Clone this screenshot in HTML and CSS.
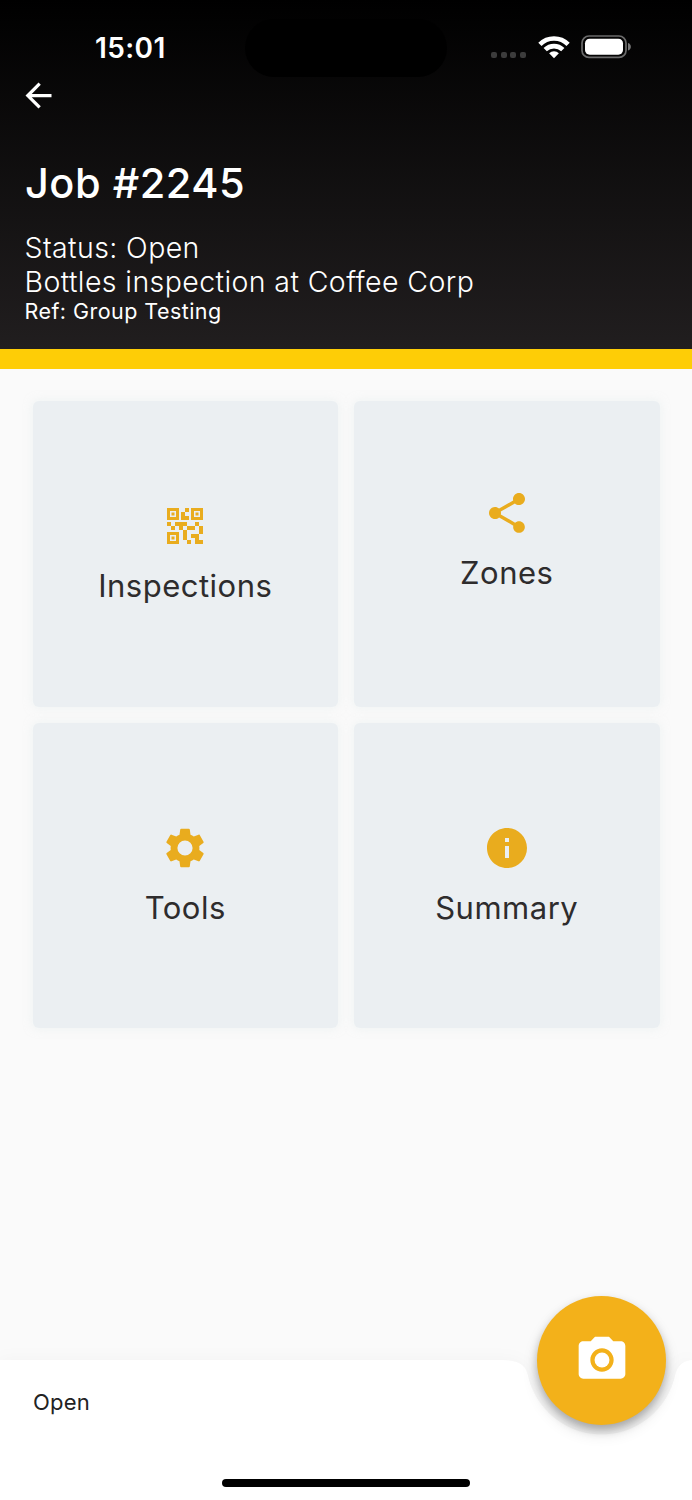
FILE: index.html
```
<!DOCTYPE html>
<html lang="en">
<head>
    <meta charset="UTF-8">
    <meta name="viewport" content="width=device-width, initial-scale=1.0">
    <title>Job #2245</title>
    <link rel="stylesheet" href="styles.css">
</head>
<body>
    <div class="screen">
        <header class="header">
            <div class="status-bar">
                <span class="time">15:01</span>
                <div class="island"></div>
                <div class="status-icons">
                    <div class="signal"><i></i><i></i><i></i><i></i></div>
                    <svg class="wifi" width="32" height="24" viewBox="0 0 32 24">
                        <g fill="none" stroke="#fff" stroke-width="4.6">
                            <path d="M1.9 9.3a20 20 0 0 1 28.2 0"/>
                            <path d="M7.2 14.7a12.5 12.5 0 0 1 17.6 0"/>
                        </g>
                        <path fill="#fff" d="M16 23.3l-4.9-5a7 7 0 0 1 9.8 0z"/>
                    </svg>
                    <svg class="battery" width="51" height="24" viewBox="0 0 51 24">
                        <rect x="1" y="1" width="44" height="21.4" rx="7" fill="none" stroke="#6b6b6b" stroke-width="1.7"/>
                        <rect x="4" y="3.7" width="38" height="16" rx="4.6" fill="#fff"/>
                        <path d="M47 8c3.8 1.2 3.8 6.4 0 7.6z" fill="#777"/>
                    </svg>
                </div>
            </div>
            <button class="back" aria-label="Back">
                <svg width="39" height="39" viewBox="0 0 24 24"><path d="M20 11H7.830l5.590-5.590L12 4l-8 8 8 8 1.410-1.410L7.830 13H20v-2z"/></svg>
            </button>
            <h1>Job #2245</h1>
            <p class="info">Status: Open</p>
            <p class="info desc">Bottles inspection at Coffee Corp</p>
            <p class="ref">Ref: Group Testing</p>
        </header>

        <main class="grid">
            <a class="tile">
                <svg viewBox="0 0 24 24"><path d="M15 21h-2v-2h2v2zm-2-7h-2v5h2v-5zm8-2h-2v4h2v-4zm-2-2h-2v2h2v-2zM7 12H5v2h2v-2zm-2-2H3v2h2v-2zm7-5h2V3h-2v2zm-7.500-.5v3h3v-3h-3zM9 9H3V3h6v6zm-4.500 7.500v3h3v-3h-3zM9 21H3v-6h6v6zm7.500-16.500v3h3v-3h-3zM21 9h-6V3h6v6zm-2 10v-3h-4v2h2v3h4v-2h-2zm-2-7h-4v2h4v-2zm-4-2H7v2h2v2h2v-2h2v-2zm1-1V7h-2V5h-2v4h4zM6.750 5.250h-1.500v1.500h1.500v-1.500zm0 12h-1.500v1.500h1.500v-1.500zm12-12h-1.500v1.500h1.500v-1.500z"/></svg>
                <span>Inspections</span>
            </a>
            <a class="tile tile-zones">
                <svg viewBox="0 0 24 24"><path d="M18 16.080c-.76 0-1.440.3-1.960.77L8.910 12.700c.05-.23.09-.46.09-.7s-.04-.47-.09-.7l7.050-4.110c.54.5 1.250.81 2.040.81 1.660 0 3-1.340 3-3s-1.340-3-3-3-3 1.340-3 3c0 .24.04.47.09.7L8.040 9.810C7.500 9.310 6.790 9 6 9c-1.660 0-3 1.340-3 3s1.340 3 3 3c.79 0 1.500-.31 2.040-.81l7.120 4.160c-.05.21-.08.43-.08.65 0 1.610 1.310 2.920 2.920 2.920 1.610 0 2.920-1.310 2.920-2.920s-1.310-2.920-2.920-2.920z"/></svg>
                <span>Zones</span>
            </a>
            <a class="tile">
                <svg viewBox="0 0 24 24"><path d="M19.140 12.940c.04-.3.06-.61.06-.94 0-.32-.02-.64-.07-.94l2.030-1.580c.18-.14.23-.41.12-.61l-1.920-3.320c-.12-.22-.37-.29-.59-.22l-2.390.96c-.5-.38-1.030-.7-1.620-.94l-.36-2.540c-.04-.24-.24-.41-.48-.41h-3.840c-.24 0-.43.17-.47.41l-.36 2.540c-.59.24-1.130.57-1.620.94l-2.390-.96c-.22-.08-.47 0-.59.22L2.740 8.870c-.12.21-.08.47.12.61l2.030 1.580c-.05.3-.09.63-.09.94s.02.64.07.94l-2.030 1.580c-.18.14-.23.41-.12.61l1.920 3.320c.12.22.37.29.59.22l2.390-.96c.5.38 1.030.7 1.620.94l.36 2.540c.05.24.24.41.48.41h3.840c.24 0 .44-.17.47-.41l.36-2.540c.59-.24 1.130-.56 1.620-.94l2.390.96c.22.08.47 0 .59-.22l1.920-3.320c.12-.22.07-.47-.12-.61l-2.010-1.580zM12 15.800a3.800 3.800 0 1 1 0-7.600 3.800 3.800 0 0 1 0 7.600z"/></svg>
                <span>Tools</span>
            </a>
            <a class="tile">
                <svg viewBox="0 0 24 24"><path d="M12 2C6.480 2 2 6.480 2 12s4.480 10 10 10 10-4.480 10-10S17.520 2 12 2zm1 15h-2v-6h2v6zm0-8h-2V7h2v2z"/></svg>
                <span>Summary</span>
            </a>
        </main>

        <footer class="bottom-bar">
            <svg class="bar-shape" width="692" height="141" viewBox="0 0 692 141">
                <path d="M0 0H500C517 0 525 4 527.500 14A75.500 75.500 0 0 0 675.500 14C678 5 684 .5 692 0V141H0z"/>
            </svg>
            <span class="state">Open</span>
            <button class="fab" aria-label="Take photo">
                <svg width="56" height="56" viewBox="0 0 24 24"><circle cx="12" cy="12" r="3.200"/><path d="M9 2L7.170 4H4c-1.100 0-2 .9-2 2v12c0 1.100.9 2 2 2h16c1.100 0 2-.9 2-2V6c0-1.100-.9-2-2-2h-3.170L15 2H9zm3 15c-2.760 0-5-2.240-5-5s2.240-5 5-5 5 2.240 5 5-2.240 5-5 5z"/></svg>
            </button>
            <div class="home-indicator"></div>
        </footer>
    </div>
</body>
</html>
```
FILE: styles.css
```
* {
    box-sizing: border-box;
}
body {
    margin: 0;
    font-family: Inter, "Liberation Sans", sans-serif;
    background: #fafafa;
}
h1, p {
    margin: 0;
    font-weight: normal;
}
button {
    border: none;
    padding: 0;
    background: none;
    cursor: pointer;
}
svg {
    display: block;
}
.screen {
    width: 692px;
    height: 1500px;
    display: flex;
    flex-direction: column;
    overflow: hidden;
}

/* Header */
.header {
    height: 369px;
    padding: 0 25px;
    color: #fff;
    background: linear-gradient(#000, #211e1f);
    border-bottom: 20px solid #fecd06;
    background-clip: padding-box;
    white-space: nowrap;
}
.status-bar {
    display: flex;
    align-items: flex-start;
    height: 76px;
    padding-left: 70px;
}
.time {
    width: 150px;
    padding-top: 31px;
    font-size: 28px;
    line-height: 34px;
    font-weight: 600;
    letter-spacing: 0.4px;
}
.island {
    width: 202px;
    height: 58px;
    margin-top: 19px;
    border-radius: 29px;
    background: #000;
}
.status-icons {
    display: flex;
    margin: 35px 0 0 44px;
}
.signal {
    display: flex;
    gap: 3.7px;
    padding-top: 16.5px;
    margin-right: 11.5px;
}
.signal i {
    width: 6px;
    height: 6.5px;
    border-radius: 2px;
    background: #3c3c3c;
}
.battery {
    margin-left: 11.5px;
}
.back {
    display: block;
    margin-left: -6px;
}
.back svg {
    fill: #fff;
}
h1 {
    margin-top: 43px;
    font-size: 41.5px;
    line-height: 50px;
    font-weight: 550;
    letter-spacing: 0.5px;
}
.info {
    margin-top: 23px;
    font-size: 28.5px;
    line-height: 34px;
    font-weight: 300;
    letter-spacing: 0.4px;
    margin-left: -0.5px;
}
.desc {
    margin-top: 0;
}
.ref {
    margin-left: -0.5px;
    font-size: 21.5px;
    line-height: 25px;
    letter-spacing: 0.45px;
}

/* Tiles */
.grid {
    display: grid;
    grid-template-columns: 305.5px 305.5px;
    grid-auto-rows: 305.5px;
    gap: 16px;
    padding: 32px 32.5px;
    flex: 1;
}
.tile {
    display: flex;
    flex-direction: column;
    align-items: center;
    padding-top: 101px;
    border-radius: 6px;
    background: #ebeff2;
    box-shadow: 0 0 10px rgba(225, 235, 235, 0.5);
    color: #2e2c2d;
    font-size: 31px;
    line-height: 40px;
    letter-spacing: 0.5px;
}
.tile-zones {
    padding-top: 88px;
}
.tile svg {
    width: 48px;
    height: 48px;
    margin-bottom: 16px;
    fill: #e9ac1e;
}

/* Bottom bar */
.bottom-bar {
    position: relative;
    height: 140.5px;
    padding: 28px 33px 0;
}
.bar-shape {
    position: absolute;
    top: 0;
    left: 0;
    fill: #fff;
    filter: drop-shadow(0 0 8px rgba(0, 0, 0, 0.03));
}
.state {
    position: relative;
    display: block;
    font-size: 22px;
    line-height: 28px;
    color: #222;
    letter-spacing: 0.2px;
}
.fab {
    position: absolute;
    left: 537px;
    top: -64px;
    width: 129px;
    height: 129px;
    display: flex;
    align-items: center;
    justify-content: center;
    border-radius: 50%;
    background: #f3b11a;
    box-shadow: 0 5px 9px rgba(0, 0, 0, 0.25), 0 8px 16px rgba(0, 0, 0, 0.12);
}
.fab svg {
    fill: #fff;
}
.home-indicator {
    position: relative;
    width: 248px;
    height: 8px;
    margin: 63px auto 0;
    border-radius: 4px;
    background: #000;
}
```
